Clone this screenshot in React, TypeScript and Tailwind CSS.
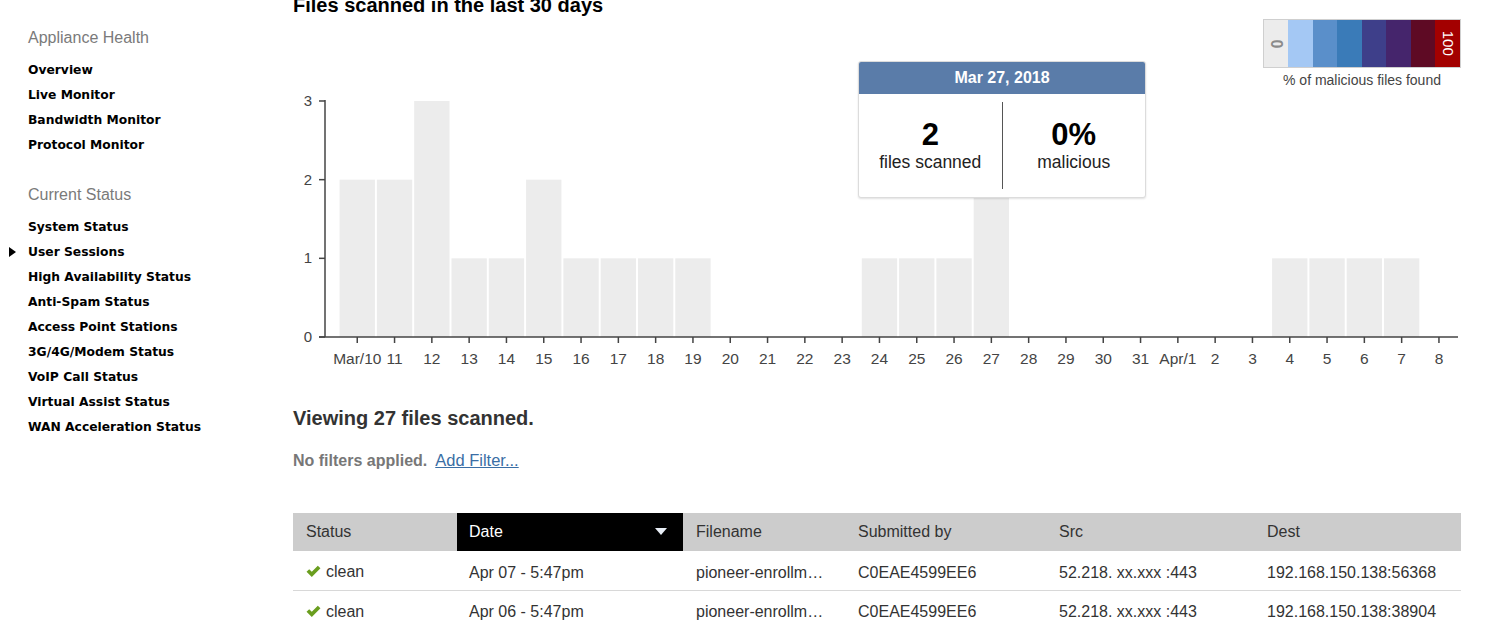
import React from 'react';

const healthLinks = ['Overview', 'Live Monitor', 'Bandwidth Monitor', 'Protocol Monitor'];
const statusLinks = [
  'System Status',
  'User Sessions',
  'High Availability Status',
  'Anti-Spam Status',
  'Access Point Stations',
  '3G/4G/Modem Status',
  'VoIP Call Status',
  'Virtual Assist Status',
  'WAN Acceleration Status',
];

const days = [
  { label: 'Mar/10', v: 2 }, { label: '11', v: 2 }, { label: '12', v: 3 }, { label: '13', v: 1 },
  { label: '14', v: 1 }, { label: '15', v: 2 }, { label: '16', v: 1 }, { label: '17', v: 1 },
  { label: '18', v: 1 }, { label: '19', v: 1 }, { label: '20', v: 0 }, { label: '21', v: 0 },
  { label: '22', v: 0 }, { label: '23', v: 0 }, { label: '24', v: 1 }, { label: '25', v: 1 },
  { label: '26', v: 1 }, { label: '27', v: 2 }, { label: '28', v: 0 }, { label: '29', v: 0 },
  { label: '30', v: 0 }, { label: '31', v: 0 }, { label: 'Apr/1', v: 0 }, { label: '2', v: 0 },
  { label: '3', v: 0 }, { label: '4', v: 1 }, { label: '5', v: 1 }, { label: '6', v: 1 },
  { label: '7', v: 1 }, { label: '8', v: 0 },
];

const legendColors = ['#ececec', '#a4c8f4', '#5a8fca', '#3a7bb8', '#3e3f8a', '#45256c', '#5e0a24', '#a30000'];

const rows = [
  { date: 'Apr 07 - 5:47pm', dest: '192.168.150.138:56368' },
  { date: 'Apr 06 - 5:47pm', dest: '192.168.150.138:38904' },
];

// chart geometry (svg local coords)
const BAND0 = 45.6;
const BAND = 37.3;
const Y0 = 322;
const UNIT = 78.67;

function Chart() {
  return (
    <svg width="1168" height="360" className="block" style={{ fontFamily: '"Liberation Sans", Arial, sans-serif' }}>
      {days.map((d, i) => {
        const x = BAND0 + i * BAND;
        return d.v > 0 ? (
          <rect key={i} x={x + 1} y={Y0 - d.v * UNIT} width={BAND - 2} height={d.v * UNIT} fill="#ececec" />
        ) : null;
      })}
      {/* y axis */}
      <line x1="32" y1="85" x2="32" y2={Y0} stroke="#444" strokeWidth="1.5" />
      {[0, 1, 2, 3].map((t) => (
        <g key={t}>
          <line x1="26" x2="32" y1={Y0 - t * UNIT} y2={Y0 - t * UNIT} stroke="#444" strokeWidth="1.5" />
          <text x="19" y={Y0 - t * UNIT + 5} textAnchor="end" fontSize="15" fill="#444">
            {t}
          </text>
        </g>
      ))}
      {/* x axis */}
      <line x1="26" x2="1165" y1={Y0} y2={Y0} stroke="#444" strokeWidth="1.5" />
      {days.map((d, i) => {
        const cx = BAND0 + i * BAND + BAND / 2;
        return (
          <g key={i}>
            <line x1={cx} x2={cx} y1={Y0} y2={Y0 + 6} stroke="#444" strokeWidth="1.5" />
            <text x={cx} y={Y0 + 27} textAnchor="middle" fontSize="15.5" fill="#444">
              {d.label}
            </text>
          </g>
        );
      })}
    </svg>
  );
}

function Check() {
  return (
    <svg width="15" height="13" viewBox="0 0 14 12" className="inline-block">
      <path d="M0.5 6.3 L3 3.9 L5.4 6.3 L11 0.6 L13.5 3 L5.4 11.2 Z" fill="#6a9e1f" />
    </svg>
  );
}

export default function App() {
  return (
    <div
      className="flex w-[1500px] h-[630px] overflow-hidden bg-white text-[#333]"
      style={{ fontFamily: '"Liberation Sans", Arial, sans-serif' }}
    >
      {/* sidebar */}
      <aside className="w-[293px] shrink-0 pl-[28px]">
        <h3 className="mt-[28px] text-[16px] leading-[20px] text-[#7a7a7a]">Appliance Health</h3>
        <ul className="mt-[9.5px] text-[12.3px] font-bold leading-[25px] text-black" style={{ fontFamily: '"DejaVu Sans", Verdana, sans-serif' }}>
          {healthLinks.map((l) => (
            <li key={l}>{l}</li>
          ))}
        </ul>
        <h3 className="mt-[27.5px] text-[16px] leading-[20px] text-[#7a7a7a]">Current Status</h3>
        <ul className="mt-[9.5px] text-[12.3px] font-bold leading-[25px] text-black" style={{ fontFamily: '"DejaVu Sans", Verdana, sans-serif' }}>
          {statusLinks.map((l) => (
            <li key={l} className="relative">
              {l === 'User Sessions' && (
                <span className="absolute left-[-19px] top-[7px] h-0 w-0 border-y-[5.5px] border-l-[7px] border-y-transparent border-l-black" />
              )}
              {l}
            </li>
          ))}
        </ul>
      </aside>

      {/* main */}
      <main className="w-[1168px] shrink-0">
        <h2 className="mt-[-5px] text-[20px] font-bold leading-[20px] text-black">Files scanned in the last 30 days</h2>
        <div className="relative">
          <Chart />
          {/* legend */}
          <div className="absolute right-0 top-[4px] w-[198px]">
            <div className="flex h-[49px] border border-[#cfcfcf]">
              {legendColors.map((c, i) => (
                <div key={c} className="flex flex-1 items-center justify-center" style={{ backgroundColor: c }}>
                  {i === 0 && <span className="rotate-90 text-[16px] font-bold text-[#8a8a8a]">0</span>}
                  {i === 7 && <span className="rotate-90 text-[15px] text-white">100</span>}
                </div>
              ))}
            </div>
            <p className="mt-[4px] text-center text-[14px] leading-[16px] text-[#444]">% of malicious files found</p>
          </div>
          {/* tooltip */}
          <div className="absolute left-[565px] top-[46px] w-[288px] h-[137px] overflow-hidden rounded-[3px] border border-[#dcdcdc] bg-white shadow-[0_1px_2px_rgba(0,0,0,0.12)]">
            <div className="flex h-[32px] items-center justify-center bg-[#5a7ca9] text-[16px] font-bold text-white">Mar 27, 2018</div>
            <div className="flex h-[103px] items-center">
              <div className="flex flex-1 flex-col items-center">
                <span className="text-[31px] font-bold leading-[32px] text-black">2</span>
                <span className="text-[17.5px] leading-[22px] text-[#222]">files scanned</span>
              </div>
              <div className="h-[87px] w-px bg-[#555]" />
              <div className="flex flex-1 flex-col items-center">
                <span className="text-[31px] font-bold leading-[32px] text-black">0%</span>
                <span className="text-[17.5px] leading-[22px] text-[#222]">malicious</span>
              </div>
            </div>
          </div>
        </div>

        <h2 className="mt-[31px] text-[20px] font-bold leading-[24px] text-[#333]">Viewing 27 files scanned.</h2>
        <p className="mt-[20px] text-[16px] leading-[20px]">
          <span className="font-bold text-[#777]">No filters applied.</span>
          <a className="ml-[8px] text-[16.5px] text-[#3a6ea5] underline">Add Filter...</a>
        </p>

        <table className="mt-[42px] w-[1168px] table-fixed border-collapse text-left text-[16px]">
          <colgroup>
            <col className="w-[164px]" />
            <col className="w-[226px]" />
            <col className="w-[163px]" />
            <col className="w-[201px]" />
            <col className="w-[208px]" />
            <col className="w-[206px]" />
          </colgroup>
          <thead>
            <tr className="h-[38px] bg-[#cccccc] text-[16px] text-[#333]">
              <th className="pl-[13px] font-normal">Status</th>
              <th className="bg-black pl-[12px] pr-[16px] font-normal text-white">
                <div className="flex items-center justify-between">
                  <span>Date</span>
                  <svg width="12" height="8" viewBox="0 0 12 8">
                    <path d="M0 0 L12 0 L6 7 Z" fill="#e8eef6" />
                  </svg>
                </div>
              </th>
              <th className="pl-[13px] font-normal">Filename</th>
              <th className="pl-[12px] font-normal">Submitted by</th>
              <th className="pl-[12px] font-normal">Src</th>
              <th className="pl-[12px] font-normal">Dest</th>
            </tr>
          </thead>
          <tbody>
            {rows.map((r) => (
              <tr key={r.date} className="h-[39.5px] border-b border-[#d8d8d8] text-[#333]">
                <td className="pl-[13px] pt-[4px]">
                  <span className="inline-flex items-center gap-[5px]">
                    <Check />
                    clean
                  </span>
                </td>
                <td className="pl-[12px] pt-[4px]">{r.date}</td>
                <td className="pl-[13px] pt-[4px]">pioneer-enrollm…</td>
                <td className="pl-[12px] pt-[4px]">C0EAE4599EE6</td>
                <td className="pl-[12px] pt-[4px]">52.218. xx.xxx :443</td>
                <td className="pl-[12px] pt-[4px]">{r.dest}</td>
              </tr>
            ))}
          </tbody>
        </table>
      </main>
    </div>
  );
}
